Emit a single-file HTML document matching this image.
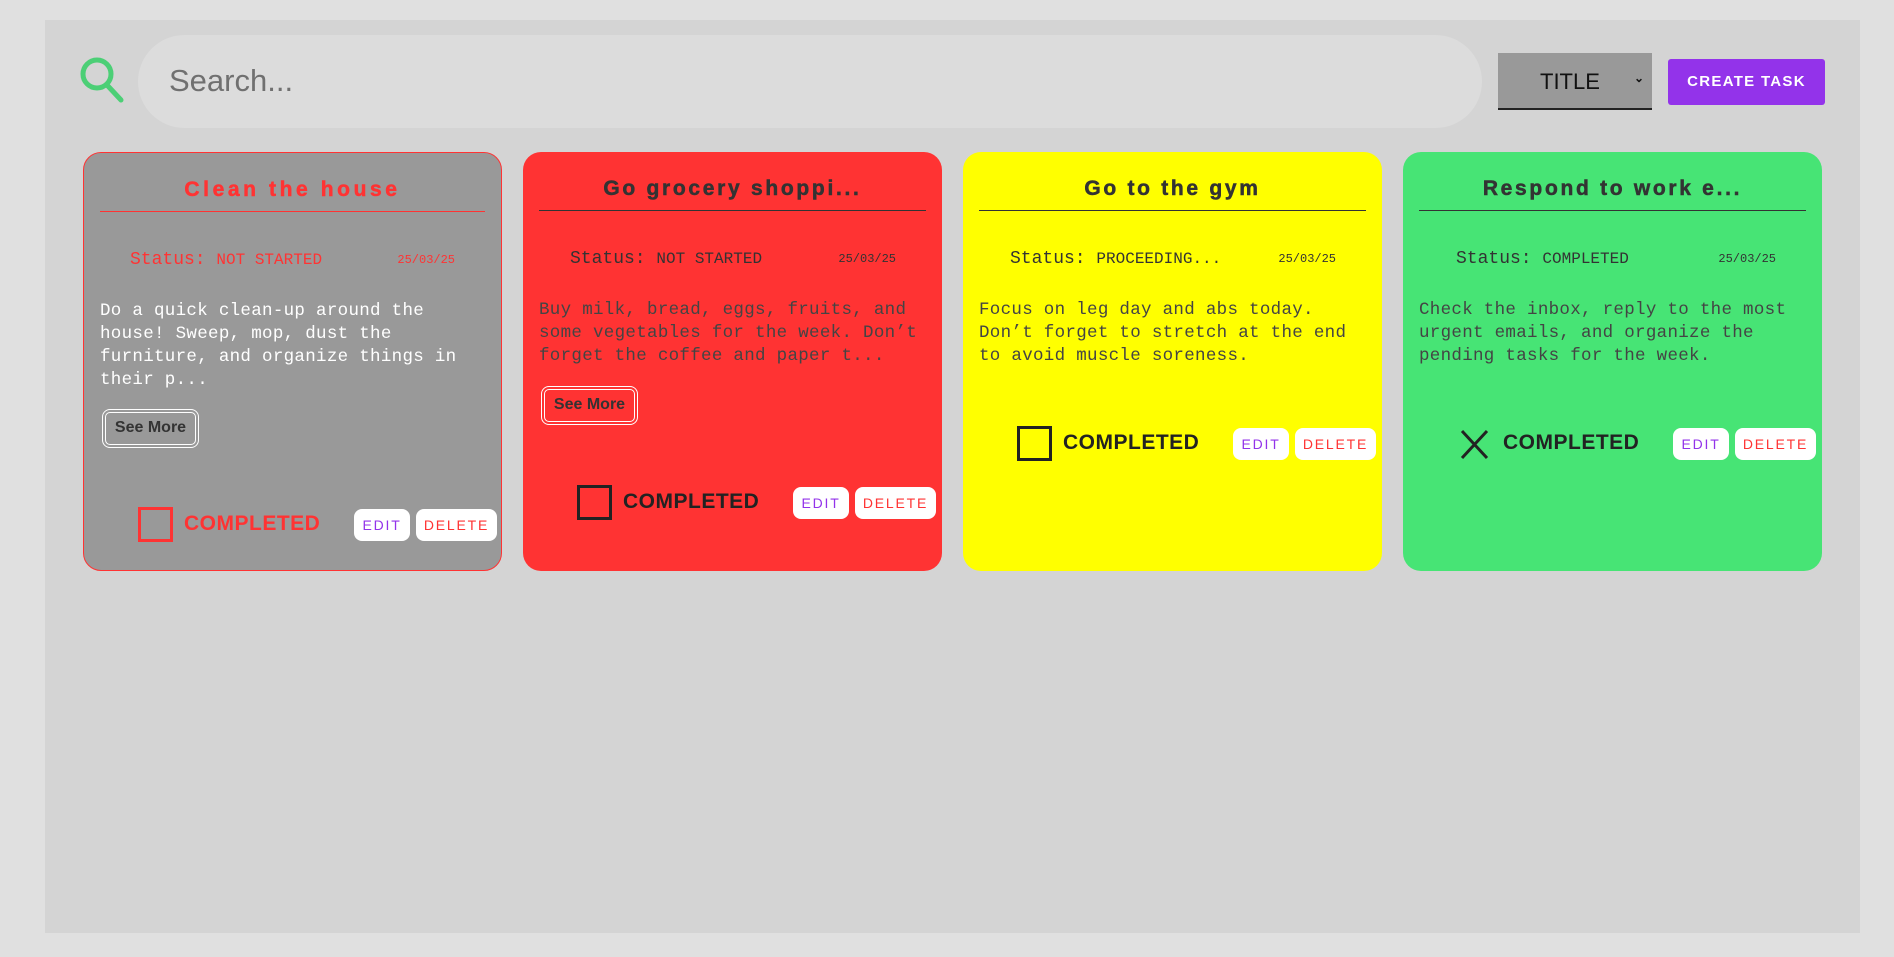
<!DOCTYPE html>
<html><head><meta charset="utf-8"><style>
*{box-sizing:border-box;margin:0;padding:0}
body{width:1894px;height:957px;background:#e0e0e0;position:relative;overflow:hidden;font-family:"Liberation Sans",sans-serif}
.panel{position:absolute;left:45px;top:20px;width:1815px;height:913px;background:#d4d4d4}
.search{position:absolute;left:138px;top:35px;width:1344px;height:93px;border-radius:47px;background:#dcdcdc}
.search span{position:absolute;left:31px;top:28px;font-size:31px;color:#707070}
.sel{position:absolute;left:1498px;top:53px;width:154px;height:57px;background:#999;border-bottom:2px solid #222;font-size:22px;color:#111}
.sel span{position:absolute;left:42px;top:16px}
.sel i{position:absolute;right:8px;top:18px;font-style:normal;font-size:12px;font-weight:bold}
.create{position:absolute;left:1668px;top:59px;width:157px;height:46px;background:#9333ea;border-radius:3px;color:#fff;font-weight:bold;font-size:15px;letter-spacing:1.3px;text-align:center;line-height:46px}
.card{position:absolute;top:152px;width:419px;height:419px;border-radius:18px}
.t{position:absolute;left:16px;right:16px;top:25px;height:34px;text-align:center;font-size:21px;font-weight:bold;letter-spacing:2.7px;border-bottom:1px solid #333;-webkit-text-stroke:0.5px currentColor}
.st{position:absolute;left:47px;top:97px;font-family:"Liberation Mono",monospace;font-size:18px;}
.st b{font-weight:normal;font-size:16px}
.dt{position:absolute;right:46px;top:100px;font-family:"Liberation Mono",monospace;font-size:12px}
.d{position:absolute;left:16px;right:14px;top:147px;font-family:"Liberation Mono",monospace;font-size:17.5px;line-height:23px;letter-spacing:0.3px}
.sm{position:absolute;left:18px;width:97px;height:39px;border:4px double #fff;border-radius:8px;font-weight:bold;font-size:16px;color:#333;text-align:center;line-height:30px}
.row{position:absolute;left:0;width:419px;height:36px}
.cb{position:absolute;top:0;width:35px;height:35px;border:3px solid #222}
.cl{position:absolute;top:5px;font-size:21px;font-weight:900;letter-spacing:.5px}
.e,.x{position:absolute;top:2px;height:32px;background:#fff;border-radius:8px;font-size:14px;letter-spacing:1.8px;text-align:center;line-height:32px}
.e{width:56px;color:#9333ea}.x{width:81px;color:#ff3333}
</style></head><body>
<div class="panel"></div>
<svg style="position:absolute;left:78px;top:55px" width="50" height="52" viewBox="78 55 50 52"><circle cx="97" cy="74" r="14" fill="none" stroke="#4ccf76" stroke-width="5"/><line x1="107" y1="85" x2="121" y2="100" stroke="#4ccf76" stroke-width="5" stroke-linecap="round"/></svg>
<div class="search"><span>Search...</span></div>
<div class="sel"><span>TITLE</span><i>⌄</i></div>
<div class="create">CREATE TASK</div>

<div class="card" style="left:83px;background:#999;border:1px solid #ff3333">
<div class="t" style="color:#ff3333;border-color:#ff3333;letter-spacing:3.6px">Clean the house</div>
<div class="st" style="color:#ff3333;left:46px">Status: <b>NOT STARTED</b></div>
<div class="dt" style="color:#ff3333">25/03/25</div>
<div class="d" style="color:#fff">Do a quick clean-up around the house! Sweep, mop, dust the furniture, and organize things in their p...</div>
<div class="sm" style="top:256px">See More</div>
<div class="row" style="top:354px">
<div class="cb" style="left:54px;border-color:#ff3333"></div>
<div class="cl" style="left:100px;color:#ff3333">COMPLETED</div>
<div class="e" style="left:270px">EDIT</div><div class="x" style="left:332px">DELETE</div></div>
</div>

<div class="card" style="left:523px;background:#ff3333">
<div class="t" style="color:#333">Go grocery shoppi...</div>
<div class="st" style="color:#333">Status: <b>NOT STARTED</b></div>
<div class="dt" style="color:#333">25/03/25</div>
<div class="d" style="color:#444">Buy milk, bread, eggs, fruits, and some vegetables for the week. Don’t forget the coffee and paper t...</div>
<div class="sm" style="top:234px">See More</div>
<div class="row" style="top:333px">
<div class="cb" style="left:54px"></div>
<div class="cl" style="left:100px;color:#222">COMPLETED</div>
<div class="e" style="left:270px">EDIT</div><div class="x" style="left:332px">DELETE</div></div>
</div>

<div class="card" style="left:963px;background:#ffff00">
<div class="t" style="color:#333">Go to the gym</div>
<div class="st" style="color:#333">Status: <b>PROCEEDING...</b></div>
<div class="dt" style="color:#333">25/03/25</div>
<div class="d" style="color:#444">Focus on leg day and abs today. Don’t forget to stretch at the end to avoid muscle soreness.</div>
<div class="row" style="top:274px">
<div class="cb" style="left:54px"></div>
<div class="cl" style="left:100px;color:#222">COMPLETED</div>
<div class="e" style="left:270px">EDIT</div><div class="x" style="left:332px">DELETE</div></div>
</div>

<div class="card" style="left:1403px;background:#47e475">
<div class="t" style="color:#333">Respond to work e...</div>
<div class="st" style="color:#333;left:53px">Status: <b>COMPLETED</b></div>
<div class="dt" style="color:#333">25/03/25</div>
<div class="d" style="color:#444">Check the inbox, reply to the most urgent emails, and organize the pending tasks for the week.</div>
<div class="row" style="top:274px">
<svg style="position:absolute;left:56px;top:2px" width="32" height="32"><path d="M3 3L28 30M28 3L3 30" stroke="#222" stroke-width="3"/></svg>
<div class="cl" style="left:100px;color:#222">COMPLETED</div>
<div class="e" style="left:270px">EDIT</div><div class="x" style="left:332px">DELETE</div></div>
</div>
</body></html>
